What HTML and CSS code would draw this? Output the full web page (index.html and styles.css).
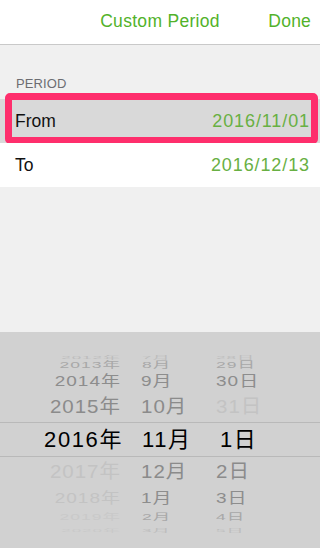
FILE: index.html
```html
<!DOCTYPE html>
<html lang="en">
<head>
<meta charset="utf-8">
<title>Custom Period</title>
<link rel="stylesheet" href="styles.css">
</head>
<body>
<div class="screen">
  <header class="nav">
    <span class="nav-title">Custom Period</span>
    <span class="nav-done">Done</span>
  </header>
  <main class="content">
    <div class="section-label">PERIOD</div>
    <div class="list">
      <div class="row selected"><span class="row-label">From</span><span class="row-value">2016/11/01</span></div>
      <div class="row"><span class="row-label">To</span><span class="row-value">2016/12/13</span></div>
    </div>
  </main>
  <div class="picker">
    <div class="prow r4 top"><span class="y"><span>2012年</span></span><span class="m"><span>7月</span></span><span class="d"><span>28日</span></span></div>
    <div class="prow r3 top"><span class="y"><span>2013年</span></span><span class="m"><span>8月</span></span><span class="d"><span>29日</span></span></div>
    <div class="prow r2 top"><span class="y"><span>2014年</span></span><span class="m"><span>9月</span></span><span class="d"><span>30日</span></span></div>
    <div class="prow r1 top"><span class="y"><span>2015年</span></span><span class="m"><span>10月</span></span><span class="d dim"><span>31日</span></span></div>
    <div class="prow r0"><span class="y"><span>2016年</span></span><span class="m"><span>11月</span></span><span class="d"><span>1日</span></span></div>
    <div class="prow r1 bottom"><span class="y dim"><span>2017年</span></span><span class="m"><span>12月</span></span><span class="d"><span>2日</span></span></div>
    <div class="prow r2 bottom"><span class="y dim"><span>2018年</span></span><span class="m"><span>1月</span></span><span class="d"><span>3日</span></span></div>
    <div class="prow r3 bottom"><span class="y dim"><span>2019年</span></span><span class="m"><span>2月</span></span><span class="d"><span>4日</span></span></div>
    <div class="prow r4 bottom"><span class="y dim"><span>2020年</span></span><span class="m"><span>3月</span></span><span class="d"><span>5日</span></span></div>
  </div>
</div>
</body>
</html>
```

FILE: styles.css
```css
* { box-sizing: border-box; }
html, body { margin: 0; padding: 0; }
body {
  width: 320px;
  height: 548px;
  overflow: hidden;
  font-family: "Liberation Sans", "Noto Sans CJK JP", sans-serif;
  background: #f0f0f0;
}
.screen {
  display: flex;
  flex-direction: column;
  height: 548px;
}
.nav {
  height: 45px;
  flex: none;
  background: #fff;
  border-bottom: 1px solid #c9c9c9;
  display: grid;
  grid-template-columns: 1fr auto 1fr;
  align-items: center;
  padding: 0 9px 1px 9px;
  color: #52b22a;
  font-size: 17.5px;
}
.nav-title { grid-column: 2; letter-spacing: 0.3px; }
.nav-done { grid-column: 3; justify-self: end; letter-spacing: 0.2px; }
.content {
  flex: 1;
  background: #f0f0f0;
}
.section-label {
  height: 54px;
  display: flex;
  align-items: flex-end;
  padding: 0 0 8px 16px;
  font-size: 13px;
  color: #6d6d72;
  letter-spacing: 0.1px;
}
.list { background: #fff; }
.row {
  position: relative;
  height: 44px;
  display: flex;
  align-items: center;
  justify-content: space-between;
  padding: 0 10px 0 15px;
  background: #fff;
}
.row.selected { background: #d9d9d9; }
.row.selected::after {
  content: "";
  position: absolute;
  left: 5px;
  right: 2px;
  top: -6px;
  bottom: -1px;
  border: 7px solid #fe2e6c;
  border-radius: 5px;
}
.row-label {
  font-size: 17.5px;
  color: #111;
}
.row-value {
  font-size: 18px;
  color: #68b043;
  letter-spacing: 0.9px;
}
.picker {
  flex: none;
  height: 216px;
  background: #d1d1d1;
  padding: 17px 0 18px;
  display: flex;
  flex-direction: column;
  line-height: 1;
}
.prow {
  display: grid;
  grid-template-columns: 121px 95px 1fr;
  align-items: center;
  letter-spacing: 1px;
  overflow: visible;
}
.prow > span > span { display: inline-block; }
.prow .y { text-align: right; }
.prow .m { padding-left: 20px; }
.prow .d { padding-left: 0; }

.prow.r0 {
  height: 35px;
  font-size: 22px;
  color: #000;
  letter-spacing: 1.6px;
  border-top: 1px solid #b9b9b9;
  border-bottom: 1px solid #b9b9b9;
  grid-template-columns: 123px 95px 1fr;
}
.prow.r0 .m { padding-left: 19px; }
.prow.r0 .d { padding-left: 2px; }

.prow.r1 { height: 30px; font-size: 20.5px; color: #8b8b8b; }
.prow.r1 > span > span { transform: scaleY(0.92); }
.prow.r2 { height: 22px; font-size: 19px; color: #8d8d8d; }
.prow.r2 > span > span { transform: scaleY(0.75); }
.prow.r3 { height: 13px; font-size: 17.5px; color: #a8a8a8; }
.prow.r3 > span > span { transform: scaleY(0.5); }
.prow.r4 { height: 8px; font-size: 17px; color: #bdbdbd; }
.prow.r4 > span > span { transform: scaleY(0.25); }
.prow.r3 .m, .prow.r4 .m { padding-left: 21px; }

.prow .dim { color: #c3c3c3; }
.prow.r3 .dim, .prow.r4 .dim { color: #c9c9c9; }
```
